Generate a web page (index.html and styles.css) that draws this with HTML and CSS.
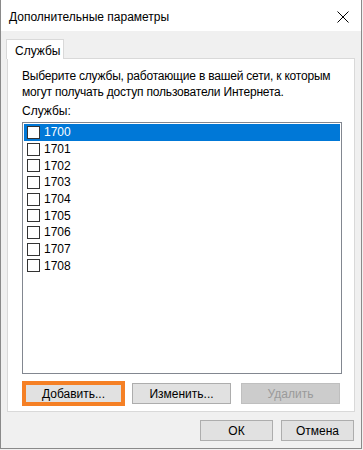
FILE: index.html
```html
<!DOCTYPE html>
<html lang="ru">
<head>
  <meta charset="UTF-8" />
  <title>Дополнительные параметры</title>
  <link rel="stylesheet" href="styles.css">
</head>
<body>
  <div class="window">
    <div class="titlebar">
      <span class="title">Дополнительные параметры</span>
      <svg class="close" width="12" height="12" viewBox="0 0 12 12">
        <path d="M0.5 0.5 L11.5 11.5 M11.5 0.5 L0.5 11.5" stroke="#000" stroke-width="1" fill="none"/>
      </svg>
    </div>

    <div class="content">
      <div class="tabs">
        <div class="tab">Службы</div>
      </div>

      <div class="panel">
        <p class="intro">Выберите службы, работающие в вашей сети, к которым<br>могут получать доступ пользователи Интернета.</p>
        <div class="list-label">Службы:</div>

        <!-- services list -->
        <div class="list">
          <div class="row selected"><span class="check"></span>1700</div>
          <div class="row"><span class="check"></span>1701</div>
          <div class="row"><span class="check"></span>1702</div>
          <div class="row"><span class="check"></span>1703</div>
          <div class="row"><span class="check"></span>1704</div>
          <div class="row"><span class="check"></span>1705</div>
          <div class="row"><span class="check"></span>1706</div>
          <div class="row"><span class="check"></span>1707</div>
          <div class="row"><span class="check"></span>1708</div>
        </div>

        <div class="panel-buttons">
          <button class="btn highlight">Добавить...</button>
          <button class="btn">Изменить...</button>
          <button class="btn" disabled>Удалить</button>
        </div>
      </div>

      <div class="dialog-buttons">
        <button class="btn small">ОК</button>
        <button class="btn small">Отмена</button>
      </div>
    </div>
  </div>
</body>
</html>
```

FILE: styles.css
```css
* {
  box-sizing: border-box;
}

body {
  margin: 0;
  background: #f0f0f0;
  font-family: "Liberation Sans", Arial, sans-serif;
  font-size: 12px;
  color: #000;
}

.window {
  width: 362px;
  height: 449px;
  border: 1px solid #8a8a8a;
  border-top: none;
  background: #f0f0f0;
}

.titlebar {
  height: 31px;
  background: #fff;
  display: flex;
  align-items: center;
  justify-content: space-between;
  padding: 2px 12px 0 8px;
}

.title {
  font-size: 12px;
}

.content {
  padding: 8px 6px 0 5px;
}

.tabs {
  display: flex;
  height: 20px;
  position: relative;
  z-index: 1;
}

.tab {
  width: 58px;
  height: 20px;
  background: #fff;
  border: 1px solid #d9d9d9;
  border-bottom: none;
  padding: 4px 0 0 8px;
}

.panel {
  margin-left: 1px;
  margin-top: -1px;
  background: #fff;
  border: 1px solid #d9d9d9;
  height: 354px;
  padding: 9px 10px 0 14px;
}

.intro {
  margin: 0;
  line-height: 16px;
  white-space: nowrap;
  letter-spacing: -0.2px;
}

.list-label {
  margin-top: 3px;
  line-height: 16px;
}

.list {
  margin-top: 3px;
  width: 320px;
  height: 252px;
  border: 1px solid #828790;
  padding: 1px 1px 0 1px;
}

.row {
  height: 16.7px;
  display: flex;
  align-items: center;
  padding-left: 3px;
  gap: 4px;
}

.row.selected {
  background: #0078d7;
  color: #fff;
}

.check {
  width: 13px;
  height: 13px;
  border: 1px solid #333;
  background: #fff;
}

.panel-buttons {
  display: flex;
  gap: 9px;
  margin-top: 9px;
  padding-left: 2px;
}

.btn {
  font-family: "Liberation Sans", Arial, sans-serif;
  font-size: 12px;
  width: 99px;
  height: 21px;
  padding: 0;
  background: #e1e1e1;
  border: 1px solid #adadad;
  color: #000;
}

.btn.highlight {
  outline: 4px solid #f58025;
  outline-offset: -2px;
}

.btn:disabled {
  background: #cccccc;
  border-color: #bfbfbf;
  color: #9a9a9a;
  margin-left: 1px;
}

.dialog-buttons {
  display: flex;
  justify-content: flex-end;
  gap: 8px;
  margin-top: 8px;
  padding-right: 1px;
}

.btn.small {
  width: 73px;
}
```
